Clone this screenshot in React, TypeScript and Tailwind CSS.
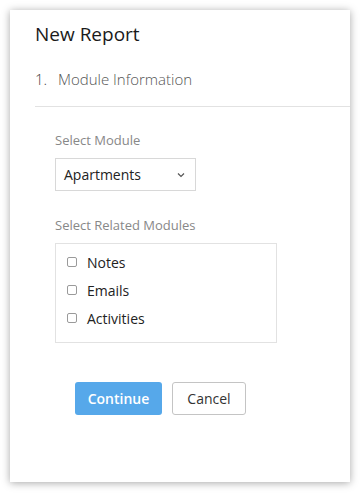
import React from "react";

const font = { fontFamily: "'Open Sans', Lato, sans-serif" };

const modules = ["Notes", "Emails", "Activities"];

const Checkbox = ({label}: { label: string }) => {
    return (
        <label className="flex items-center h-[28px]">
            <span className="w-[10px] h-[10px] rounded-[2px] border border-[#9a9a9a] bg-white ml-[11px] mr-[10px]"/>
            <span className="text-[14px] text-[#222]">{label}</span>
        </label>
    )
}

export default function App() {
    return (
        <div className="w-[360px] h-[493px] bg-white pt-[10px] pl-[10px]" style={font}>
            <div className="w-[340px] h-[472px] bg-white shadow-[0_1px_8px_rgba(0,0,0,0.35)] flex flex-col">
                <h1 className="pl-[25px] pt-[11px] text-[19px] leading-[26px] text-[#1a1a1a] font-normal">New Report</h1>
                <div className="pl-[25px] pt-[22px] flex items-baseline text-[15px] leading-[20px]">
                    <span className="text-[#444] font-light w-[23px]">1.</span>
                    <span className="text-[#555] font-light">Module Information</span>
                </div>
                <div className="ml-[25px] mt-[17px] border-t border-[#e2e2e2]"/>

                <div className="pl-[45px] pt-[25px] flex flex-col">
                    <p className="text-[13px] leading-[16px] text-[#888]">Select Module</p>
                    <div className="mt-[10px] w-[141px] h-[33px] border border-[#d8d8d8] flex items-center justify-between px-[8px]">
                        <span className="text-[14px] text-[#222]">Apartments</span>
                        <svg width="8" height="6" viewBox="0 0 8 6" className="mr-[2px]">
                            <path d="M1 1.5 L4 4.5 L7 1.5" fill="none" stroke="#555" strokeWidth="1.2"/>
                        </svg>
                    </div>

                    <p className="mt-[26px] text-[13px] leading-[16px] text-[#888]">Select Related Modules</p>
                    <div className="mt-[10px] w-[222px] h-[100px] border border-[#e2e2e2] pt-[4px] flex flex-col">
                        {modules.map((m) => <Checkbox key={m} label={m}/>)}
                    </div>
                </div>

                <div className="pl-[65px] mt-[39px] flex gap-[10px]">
                    <button className="w-[87px] h-[33px] rounded-[3px] bg-[#56a8ea] text-white text-[14px] font-semibold">Continue</button>
                    <button className="w-[74px] h-[33px] rounded-[3px] border border-[#c4c4c4] bg-white text-[#333] text-[14px]">Cancel</button>
                </div>
            </div>
        </div>
    )
}
